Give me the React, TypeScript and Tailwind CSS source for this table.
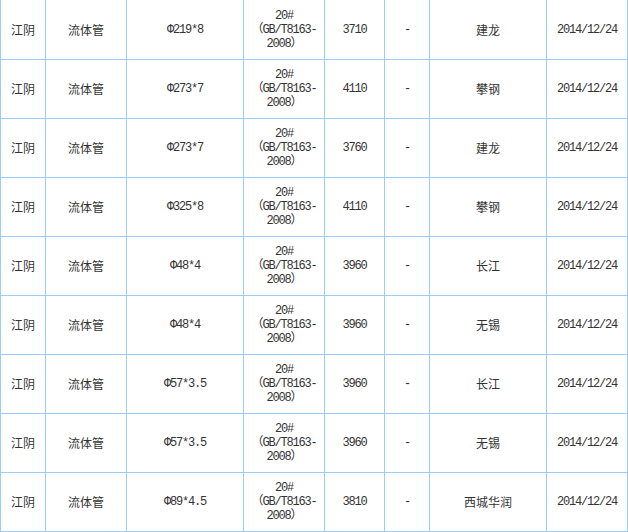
import React from "react";

const rows: [string, string, string][] = [
  ["Φ219*8", "3710", "建龙"],
  ["Φ273*7", "4110", "攀钢"],
  ["Φ273*7", "3760", "建龙"],
  ["Φ325*8", "4110", "攀钢"],
  ["Φ48*4", "3960", "长江"],
  ["Φ48*4", "3960", "无锡"],
  ["Φ57*3.5", "3960", "长江"],
  ["Φ57*3.5", "3960", "无锡"],
  ["Φ89*4.5", "3810", "西城华润"],
];

const cjk = "bg-white flex items-center justify-center text-[12px] font-['Noto_Sans_CJK_SC',sans-serif]";
const lat = "bg-white flex items-center justify-center text-center text-[12px] leading-[14px] tracking-[-1.2px] font-['Liberation_Mono','Noto_Sans_CJK_SC',monospace]";

export default function App() {
  return (
    <div className="w-[628px] h-[532px] bg-white text-[#333] overflow-hidden">
      <div className="grid grid-cols-[44px_80px_116px_80px_59px_44px_116px_80px] grid-rows-[59px_repeat(8,58px)] gap-px bg-[#99ccff] px-px pb-px">
        {rows.map((r, i) => (
          <React.Fragment key={i}>
            <div className={cjk}>江阴</div>
            <div className={cjk}>流体管</div>
            <div className={lat}>{r[0]}</div>
            <div className={lat}>
              20#
              <br />
              （GB/T8163-
              <br />
              2008）
            </div>
            <div className={lat}>{r[1]}</div>
            <div className={lat}>-</div>
            <div className={cjk}>{r[2]}</div>
            <div className={lat}>2014/12/24</div>
          </React.Fragment>
        ))}
      </div>
    </div>
  );
}
